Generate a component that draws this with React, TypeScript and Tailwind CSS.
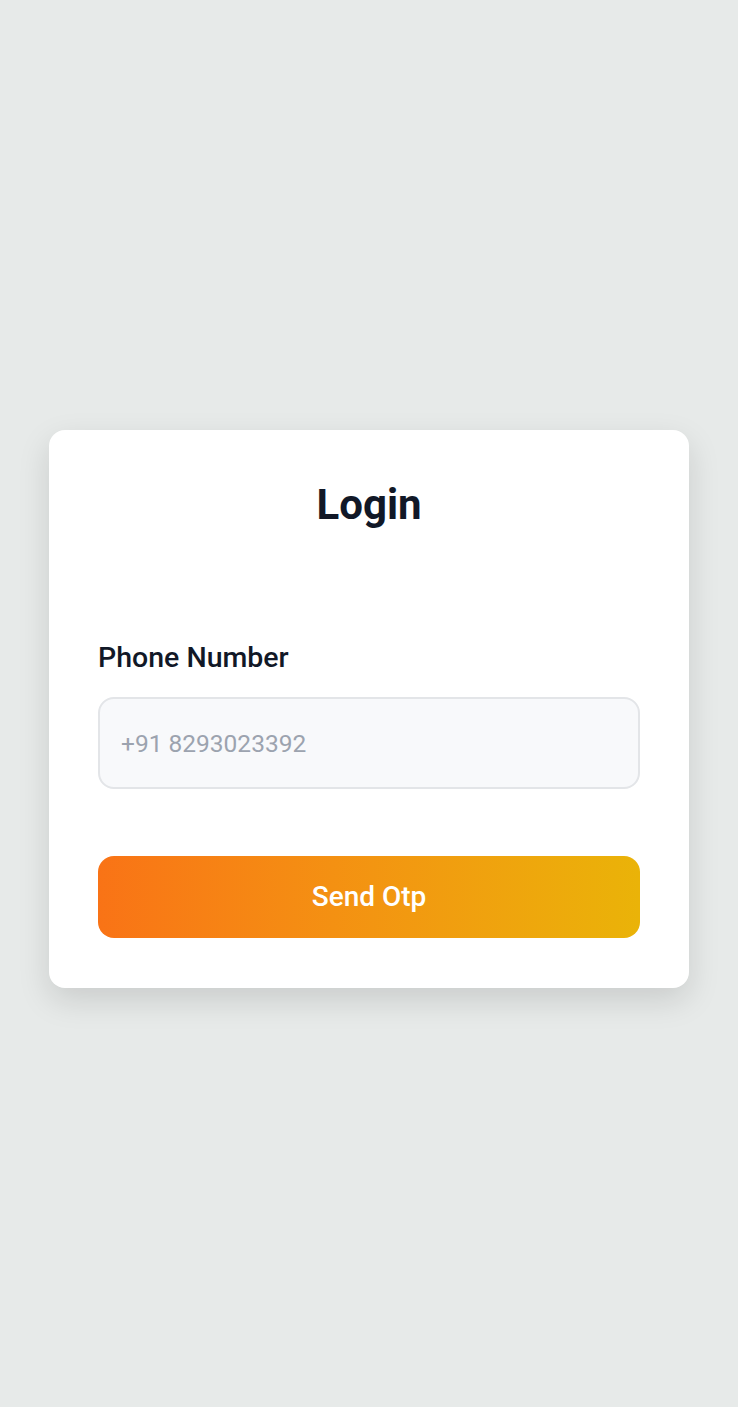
export default function App() {
  return (
    <div
      className="min-h-screen w-full bg-[#e7eae9] flex items-center justify-center pt-[11px]"
      style={{ fontFamily: "Roboto, 'Noto Sans', sans-serif" }}
    >
      <div className="w-[640px] bg-white rounded-[16px] shadow-[0_12px_32px_rgba(0,0,0,0.13)] px-[49px] pt-[54px] pb-[50px] flex flex-col">
        <h1 className="text-center text-[42px] leading-[42px] font-bold text-[#111827]">Login</h1>

        <label className="mt-[118px] text-[28.5px] leading-[28px] font-medium text-[#111827]">
          Phone Number
        </label>

        <input
          type="tel"
          placeholder="+91 8293023392"
          className="mt-[25px] h-[92px] w-full rounded-[16px] border-2 border-[#e3e5e8] bg-[#f8f9fb] px-[21px] text-[24.5px] text-[#111827] placeholder:text-[#9ca3af] outline-none"
        />

        <button className="mt-[67px] h-[82px] w-full rounded-[16px] bg-gradient-to-r from-[#f97316] to-[#eab308] text-white text-[28px] font-medium">
          Send Otp
        </button>
      </div>
    </div>
  );
}
